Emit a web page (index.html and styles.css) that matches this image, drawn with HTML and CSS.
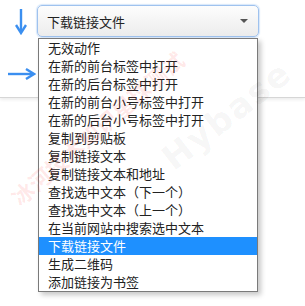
FILE: index.html
```html
<!DOCTYPE html>
<html lang="zh-CN">
<head>
    <meta charset="UTF-8">
    <title>链接动作</title>
    <link rel="stylesheet" href="styles.css">
</head>
<body>
    <div class="panel">
        <div class="side">
            <svg class="arrow-down" width="12" height="26" viewBox="0 0 12 26">
                <path d="M6 0 V23" stroke="#3b8ff0" stroke-width="2.4" fill="none"/>
                <path d="M1 16 L6 24 L11 16" stroke="#3b8ff0" stroke-width="2.4" fill="none"/>
            </svg>
            <svg class="arrow-right" width="28" height="12" viewBox="0 0 28 12">
                <path d="M0 6 H25" stroke="#3b8ff0" stroke-width="2.4" fill="none"/>
                <path d="M18 1 L26 6 L18 11" stroke="#3b8ff0" stroke-width="2.4" fill="none"/>
            </svg>
        </div>
        <div class="select-wrap">
            <div class="select">
                <span>下载链接文件</span>
                <i class="caret"></i>
            </div>
            <ul class="menu">
                <li>无效动作</li>
                <li>在新的前台标签中打开</li>
                <li>在新的后台标签中打开</li>
                <li>在新的前台小号标签中打开</li>
                <li>在新的后台小号标签中打开</li>
                <li>复制到剪贴板</li>
                <li>复制链接文本</li>
                <li>复制链接文本和地址</li>
                <li>查找选中文本（下一个）</li>
                <li>查找选中文本（上一个）</li>
                <li>在当前网站中搜索选中文本</li>
                <li class="active">下载链接文件</li>
                <li>生成二维码</li>
                <li>添加链接为书签</li>
            </ul>
        </div>
    </div>
    <div class="watermark">
        <span class="wm-red">冰河技术知识星球测试</span>
        <span class="wm-gray">Hybase</span>
    </div>
</body>
</html>
```

FILE: styles.css
```css
* {
    margin: 0;
    padding: 0;
}
html, body {
    min-height: 306px;
}
body {
    background: #fff;
    font-family: "Noto Sans CJK SC", "Microsoft YaHei", sans-serif;
    font-size: 13px;
    color: #222;
    position: relative;
}
.panel {
    height: 92px;
    padding-top: 5px;
    display: flex;
    border-bottom: 1px solid #d6d6d6;
    box-shadow: 0 2px 3px rgba(0, 0, 0, 0.07);
}
.side {
    width: 37px;
    display: flex;
    flex-direction: column;
}
.arrow-down {
    margin: 4px 0 0 15px;
}
.arrow-right {
    margin: 33px 0 0 8px;
}
.select-wrap {
    position: relative; /*下拉列表相对它定位*/
    width: 222px;
    z-index: 2;
}
.select {
    height: 32px;
    box-sizing: border-box;
    border: 1px solid #9fc2ee;
    border-radius: 5px;
    background: linear-gradient(#fdfdfd, #ececec);
    box-shadow: 0 0 1px 1px rgba(140, 185, 240, 0.35);
    display: flex;
    align-items: center;
    justify-content: space-between;
    padding: 0 10px 0 9px;
}
.caret {
    width: 0;
    height: 0;
    border-left: 4px solid transparent;
    border-right: 4px solid transparent;
    border-top: 4px solid #555;
}
.menu {
    position: absolute;
    top: 33px;
    left: 1px;
    width: 218px;
    border: 1px solid #7a7a7a;
    background: #fff;
    list-style: none;
    box-shadow: 3px 3px 5px rgba(0, 0, 0, 0.22);
}
.menu li {
    height: 18px;
    line-height: 18px;
    padding-left: 9px;
    white-space: nowrap;
}
.menu li.active {
    background: #1e90ff;
    color: #fff;
}
.watermark {
    position: absolute;
    left: 0;
    top: 0;
    width: 305px;
    height: 306px;
    overflow: hidden;
    pointer-events: none;
    z-index: 3;
}
.wm-red {
    position: absolute;
    left: 14px;
    top: 184px;
    font-size: 22px;
    font-weight: bold;
    color: rgba(255, 30, 30, 0.1);
    transform: rotate(-41deg);
    transform-origin: left center;
    white-space: nowrap;
}
.wm-gray {
    position: absolute;
    left: 150px;
    top: 95px;
    font-family: "DejaVu Sans", sans-serif;
    font-size: 34px;
    font-weight: bold;
    color: rgba(0, 0, 0, 0.05);
    transform: rotate(-38deg);
    letter-spacing: 2px;
}
```
